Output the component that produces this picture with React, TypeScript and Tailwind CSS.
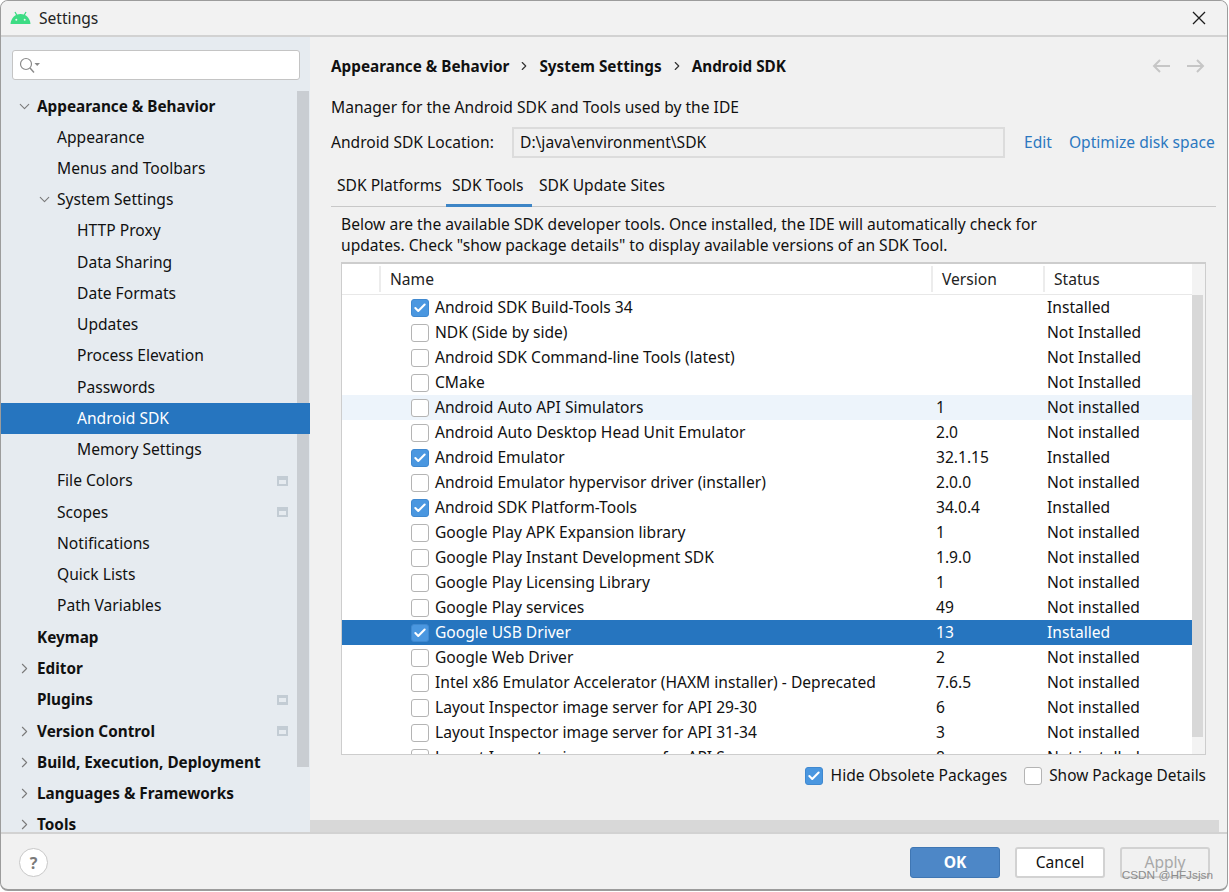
import { Check, ChevronDown, ChevronRight } from "lucide-react";

type NavItem = { label: string; level: number; bold?: boolean; arrow?: "down" | "right"; selected?: boolean; badge?: boolean };

const nav: NavItem[] = [
  { label: "Appearance & Behavior", level: 0, bold: true, arrow: "down" },
  { label: "Appearance", level: 1 },
  { label: "Menus and Toolbars", level: 1 },
  { label: "System Settings", level: 1, arrow: "down" },
  { label: "HTTP Proxy", level: 2 },
  { label: "Data Sharing", level: 2 },
  { label: "Date Formats", level: 2 },
  { label: "Updates", level: 2 },
  { label: "Process Elevation", level: 2 },
  { label: "Passwords", level: 2 },
  { label: "Android SDK", level: 2, selected: true },
  { label: "Memory Settings", level: 2 },
  { label: "File Colors", level: 1, badge: true },
  { label: "Scopes", level: 1, badge: true },
  { label: "Notifications", level: 1 },
  { label: "Quick Lists", level: 1 },
  { label: "Path Variables", level: 1 },
  { label: "Keymap", level: 0, bold: true },
  { label: "Editor", level: 0, bold: true, arrow: "right" },
  { label: "Plugins", level: 0, bold: true, badge: true },
  { label: "Version Control", level: 0, bold: true, arrow: "right", badge: true },
  { label: "Build, Execution, Deployment", level: 0, bold: true, arrow: "right" },
  { label: "Languages & Frameworks", level: 0, bold: true, arrow: "right" },
  { label: "Tools", level: 0, bold: true, arrow: "right" },
];

const tools: [string, string, string, boolean][] = [
  ["Android SDK Build-Tools 34", "", "Installed", true],
  ["NDK (Side by side)", "", "Not Installed", false],
  ["Android SDK Command-line Tools (latest)", "", "Not Installed", false],
  ["CMake", "", "Not Installed", false],
  ["Android Auto API Simulators", "1", "Not installed", false],
  ["Android Auto Desktop Head Unit Emulator", "2.0", "Not installed", false],
  ["Android Emulator", "32.1.15", "Installed", true],
  ["Android Emulator hypervisor driver (installer)", "2.0.0", "Not installed", false],
  ["Android SDK Platform-Tools", "34.0.4", "Installed", true],
  ["Google Play APK Expansion library", "1", "Not installed", false],
  ["Google Play Instant Development SDK", "1.9.0", "Not installed", false],
  ["Google Play Licensing Library", "1", "Not installed", false],
  ["Google Play services", "49", "Not installed", false],
  ["Google USB Driver", "13", "Installed", true],
  ["Google Web Driver", "2", "Not installed", false],
  ["Intel x86 Emulator Accelerator (HAXM installer) - Deprecated", "7.6.5", "Not installed", false],
  ["Layout Inspector image server for API 29-30", "6", "Not installed", false],
  ["Layout Inspector image server for API 31-34", "3", "Not installed", false],
  ["Layout Inspector image server for API S", "8", "Not installed", false],
];

function CheckBox({ checked }: { checked: boolean }) {
  return checked ? (
    <div className="w-[18px] h-[18px] shrink-0 rounded-[3px] bg-[#4a97e0] border border-[#4089d0] flex items-center justify-center">
      <Check className="w-[14px] h-[14px] text-white" strokeWidth={3.5} />
    </div>
  ) : (
    <div className="w-[18px] h-[18px] shrink-0 rounded-[3px] bg-white border border-[#b4b4b4]" />
  );
}

function Sidebar() {
  return (
    <div className="w-[309px] h-full shrink-0 bg-[#e6ebf0] relative overflow-hidden">
      <div className="ml-[11px] mr-[10px] mt-[13px] h-[30px] bg-white border border-[#c4c4c4] rounded-[3px] flex items-center pl-[6px]">
        <svg width="21" height="17" viewBox="0 0 21 17" fill="none">
          <circle cx="7" cy="7" r="5.5" stroke="#8a8a8a" strokeWidth="1.2" />
          <path d="M11 11 L15 15.5" stroke="#8a8a8a" strokeWidth="1.4" />
          <path d="M15.5 6 L21 6 L18.2 9 Z" fill="#8a8a8a" />
        </svg>
      </div>
      <div className="mt-[10.5px]">
        {nav.map((item) => (
          <NavRow key={item.label} item={item} />
        ))}
      </div>
      {/* scrollbar */}
      <div className="absolute right-[1px] top-[54px] w-[12px] h-[676px] bg-[#c9cdd2]" />
    </div>
  );
}

function NavRow({ item }: { item: NavItem }) {
  const indent = item.level === 0 ? "pl-[36px]" : item.level === 1 ? "pl-[56px]" : "pl-[76px]";
  const arrowPos = item.level === 0 ? "left-[15px]" : "left-[35px]";
  return (
    <div
      className={`h-[31.26px] relative flex items-center ${indent} ${
        item.selected ? "bg-[#2675bf] text-white z-10" : "text-[#111]"
      } ${item.bold ? "font-bold text-[15.3px]" : "text-[15.6px]"}`}
    >
      {item.arrow === "down" && (
        <ChevronDown className={`absolute ${arrowPos} w-[17px] h-[17px] text-[#7a7a7a]`} strokeWidth={1.5} />
      )}
      {item.arrow === "right" && (
        <ChevronRight className={`absolute ${arrowPos} w-[17px] h-[17px] text-[#7a7a7a]`} strokeWidth={1.5} />
      )}
      {item.label}
      {item.badge && (
        <div className="absolute left-[276px] w-[11px] h-[10px] bg-[#c3ccd4] flex items-center justify-center">
          <div className="w-[7px] h-[4px] mt-[1px] bg-[#e6ebf0]" />
        </div>
      )}
    </div>
  );
}

function ToolRow({ row, index }: { row: [string, string, string, boolean]; index: number }) {
  const [name, version, status, checked] = row;
  const selected = name === "Google USB Driver";
  const hovered = index === 4;
  return (
    <div
      className={`h-[25px] shrink-0 flex items-center text-[15.6px] ${
        selected ? "bg-[#2675bf] text-white" : hovered ? "bg-[#edf4fb]" : ""
      }`}
    >
      <div className="w-[69px] shrink-0" />
      <CheckBox checked={checked} />
      <div className="ml-[6px] w-[501px] shrink-0 whitespace-nowrap">{name}</div>
      <div className="w-[111px] shrink-0 pt-[1px]">{version}</div>
      <div className="whitespace-nowrap pt-[1px]">{status}</div>
    </div>
  );
}

function ToolsTable() {
  return (
    <div className="ml-[10px] mr-[10px] mt-[6px] h-[493px] bg-white border border-[#cdcdcd] border-t-[2px] relative overflow-hidden flex flex-col">
      <div className="h-[31px] shrink-0 flex items-center border-b border-[#e8e8e8] text-[15.6px] text-[#222]">
        <div className="w-[39px] h-[26px] border-r-2 border-[#ececec]" />
        <div className="w-[552px] pl-[9px] h-[26px] border-r-2 border-[#ececec] leading-[26px]">Name</div>
        <div className="w-[112px] pl-[9px] h-[26px] border-r-2 border-[#ececec] leading-[26px]">Version</div>
        <div className="pl-[9px] h-[26px] leading-[26px]">Status</div>
      </div>
      <div className="flex flex-col text-[#111]">
        {tools.map((row, i) => (
          <ToolRow key={row[0]} row={row} index={i} />
        ))}
      </div>
      {/* vertical scrollbar */}
      <div className="absolute right-0 top-0 bottom-0 w-[13px] bg-[#f3f3f3]">
        <div className="mt-[31px] h-[442px] w-[11px] bg-[#d8d8d8]" />
      </div>
    </div>
  );
}

function Content() {
  return (
    <div className="flex-1 min-w-0 h-full relative flex flex-col pl-[21px] pr-[11px] text-[15.6px] text-[#111]">
      <div className="h-[47px] shrink-0 flex items-end font-bold text-[15.3px] text-[#111]">
        <div className="flex items-center h-[36px]">
          <span>Appearance &amp; Behavior</span>
          <ChevronRight className="w-[14px] h-[14px] mx-[8px] text-[#333]" strokeWidth={2} />
          <span>System Settings</span>
          <ChevronRight className="w-[14px] h-[14px] mx-[8px] text-[#333]" strokeWidth={2} />
          <span>Android SDK</span>
        </div>
        <div className="ml-auto mr-[11px] flex gap-[17px] h-[36px] items-center">
          <svg width="18" height="14" viewBox="0 0 18 14" fill="none" stroke="#c6c6c6" strokeWidth="2">
            <path d="M18 7 H2 M8 1 L2 7 L8 13" />
          </svg>
          <svg width="18" height="14" viewBox="0 0 18 14" fill="none" stroke="#c6c6c6" strokeWidth="2">
            <path d="M0 7 H16 M10 1 L16 7 L10 13" />
          </svg>
        </div>
      </div>
      <div className="mt-[12px] h-[22px] leading-[22px]">Manager for the Android SDK and Tools used by the IDE</div>
      <div className="mt-[9px] h-[31px] flex items-center">
        <div className="w-[181px] shrink-0">Android SDK Location:</div>
        <div className="w-[493px] h-[31px] shrink-0 bg-[#f0f0f0] border-2 border-[#dcdcdc] pl-[6px] leading-[26px]">
          D:\java\environment\SDK
        </div>
        <span className="ml-[19px] text-[#2b78c0]">Edit</span>
        <span className="ml-[17px] text-[#2b78c0] whitespace-nowrap">Optimize disk space</span>
      </div>
      <div className="mt-[14px] h-[35px] shrink-0 flex border-b border-[#c8c8c8] text-[#111]">
        <div className="w-[115px] pl-[6px] pt-[2px]">SDK Platforms</div>
        <div className="w-[86px] pl-[6px] pt-[2px] border-b-[3px] border-[#3d85c6] h-[35px]">SDK Tools</div>
        <div className="pl-[7px] pt-[2px]">SDK Update Sites</div>
      </div>
      <div className="mt-[7px] ml-[10px] leading-[21px] whitespace-nowrap">
        Below are the available SDK developer tools. Once installed, the IDE will automatically check for
        <br />
        updates. Check "show package details" to display available versions of an SDK Tool.
      </div>
      <ToolsTable />
      <div className="mt-[9px] mr-[10px] h-[24px] flex items-center justify-end">
        <CheckBox checked />
        <span className="ml-[8px]">Hide Obsolete Packages</span>
        <div className="w-[17px]" />
        <CheckBox checked={false} />
        <span className="ml-[7px] text-[15.4px]">Show Package Details</span>
      </div>
      {/* horizontal scrollbar */}
      <div className="absolute left-0 right-[8px] bottom-0 h-[12px] bg-[#d8d8d8]" />
    </div>
  );
}

export default function App() {
  return (
    <div className="w-[1229px] h-[892px] bg-white font-['Noto_Sans',sans-serif]">
      <div className="w-[1228px] h-[891px] bg-[#f1f1f1] border border-[#9c9c9c] border-b-2 rounded-[8px] overflow-hidden flex flex-col relative">
        <div className="h-[36px] shrink-0 flex items-center border-b-2 border-[#d2d2d2] bg-[#f2f2f2]">
          <svg className="ml-[9px]" width="21" height="14" viewBox="0 0 21 14">
            <path d="M0.5 13 C1 7 5 3 10.5 3 C16 3 20 7 20.5 13 Z" fill="#3ddc84" />
            <path d="M5 1 L7 4.5 M16 1 L14 4.5" stroke="#3ddc84" strokeWidth="1.3" />
            <circle cx="6.3" cy="8.8" r="1" fill="#f2f2f2" />
            <circle cx="14.7" cy="8.8" r="1" fill="#f2f2f2" />
          </svg>
          <span className="ml-[8px] pt-[2px] text-[15.6px] text-[#222]">Settings</span>
          <svg className="ml-auto mr-[21px]" width="14" height="14" viewBox="0 0 14 14" stroke="#1c1c1c" strokeWidth="1.3">
            <path d="M1 1 L13 13 M13 1 L1 13" />
          </svg>
        </div>
        <div className="h-[795px] shrink-0 flex overflow-hidden">
          <Sidebar />
          <Content />
        </div>
        <div className="flex-1 flex items-center border-t-2 border-[#d2d2d2] text-[15.6px] pt-[2px]">
          <div className="ml-[18px] w-[29px] h-[29px] rounded-full bg-white border border-[#c8c8c8] flex items-center justify-center font-bold text-[#7a7a7a] text-[16px]">
            ?
          </div>
          <div className="ml-auto mr-[17px] flex gap-[15px]">
            <div className="w-[90px] h-[31px] pt-[1px] rounded-[3px] bg-[#4d87c7] border border-[#3f76b3] text-white font-bold flex items-center justify-center">
              OK
            </div>
            <div className="w-[90px] h-[31px] pt-[1px] rounded-[3px] bg-white border-2 border-[#d2d2d2] text-[#111] flex items-center justify-center">
              Cancel
            </div>
            <div className="w-[90px] h-[31px] pt-[1px] rounded-[3px] bg-[#f1f1f1] border-2 border-[#d2d2d2] text-[#a8a8a8] flex items-center justify-center">
              Apply
            </div>
          </div>
        </div>
        <div className="absolute right-[14px] bottom-[4px] text-[11.8px] text-[#8c8c8c] font-['Liberation_Sans',sans-serif]">
          CSDN @HFJsjsn
        </div>
      </div>
    </div>
  );
}
